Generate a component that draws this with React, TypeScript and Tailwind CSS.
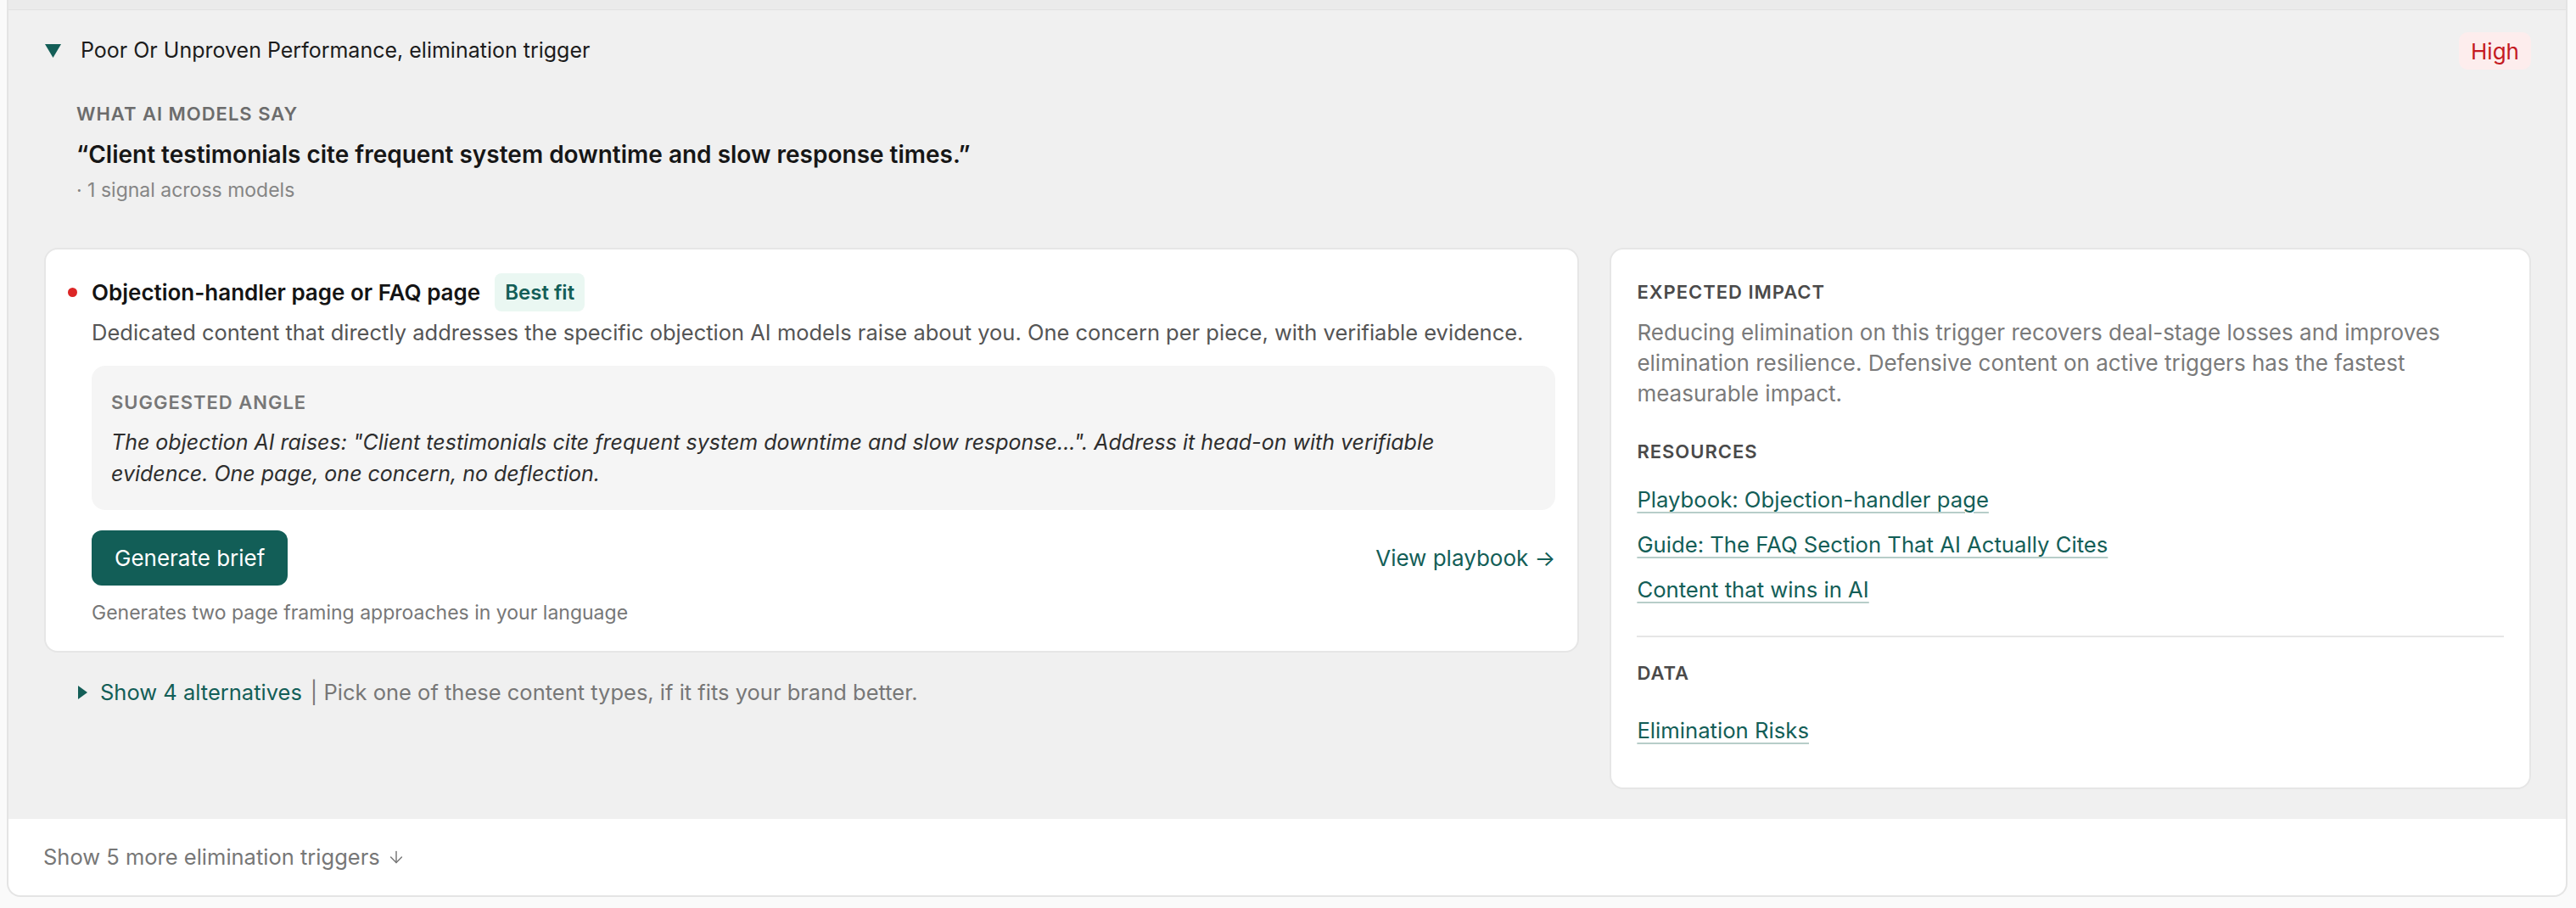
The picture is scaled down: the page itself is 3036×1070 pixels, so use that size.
import { ArrowDown } from 'lucide-react';

const resources = [
  'Playbook: Objection-handler page',
  'Guide: The FAQ Section That AI Actually Cites',
  'Content that wins in AI',
];

function Caret({ dir }: { dir: 'down' | 'right' }) {
  if (dir === 'down') {
    return (
      <svg width="19" height="16" viewBox="0 0 19 16" className="shrink-0">
        <path d="M0 0h19L9.5 16z" fill="#135e57" />
      </svg>
    );
  }
  return (
    <svg width="11" height="16" viewBox="0 0 11 16" className="shrink-0">
      <path d="M0 0l11 8-11 8z" fill="#135e57" />
    </svg>
  );
}

function Label({ children, className = '' }: { children: React.ReactNode; className?: string }) {
  return (
    <div className={`text-[22px] leading-[32px] font-semibold uppercase tracking-[0.045em] ${className}`}>
      {children}
    </div>
  );
}

export default function App() {
  return (
    <div className="min-h-screen bg-[#fafafa] font-['Inter',sans-serif]">
      <div className="ml-[8px] mr-[10px] border-x-2 border-b-2 border-[#e4e4e4] rounded-b-[16px] overflow-hidden bg-white">
        <div className="h-[12px] bg-[#ebebeb] border-b border-[#e2e2e2]"></div>

        {/* Expanded trigger */}
        <div className="bg-[#f0f0f0] pl-[42px] pr-[41px] pt-[26px] pb-[35px]">
          <div className="flex items-center justify-between h-[44px]">
            <div className="flex items-center gap-[23px] pl-[1px]">
              <Caret dir="down" />
              <span className="text-[25px] text-[#1c1c1c]">Poor Or Unproven Performance, elimination trigger</span>
            </div>
            <span className="h-[44px] px-[14px] flex items-center rounded-[10px] bg-[#fdeded] text-[26px] text-[#c41a22]">
              High
            </span>
          </div>

          <div className="pl-[38px]">
            <Label className="mt-[36px] text-[#6c6c6c]">What AI models say</Label>
            <div className="mt-[12px] text-[28px] leading-[40px] font-semibold text-[#161616]">
              “Client testimonials cite frequent system downtime and slow response times.”
            </div>
            <div className="mt-[6px] text-[23px] leading-[32px] text-[#858585]">· 1 signal across models</div>
          </div>

          <div className="mt-[52px] grid grid-cols-[5fr_3fr] gap-[36px] items-start">
            <div>
              <div className="bg-white border-2 border-[#e6e6e6] rounded-[16px] pl-[26px] pr-[26px] pt-[28px] pb-[29px]">
                <div className="flex items-center h-[45px]">
                  <span className="w-[11px] h-[11px] rounded-full bg-[#dc2626]"></span>
                  <span className="ml-[17px] text-[26px] font-semibold text-[#141414]">Objection-handler page or FAQ page</span>
                  <span className="ml-[17px] h-[45px] px-[12px] flex items-center rounded-[8px] bg-[#eaf7f2] text-[24px] font-semibold text-[#135e57]">
                    Best fit
                  </span>
                </div>
                <div className="ml-[28px]">
                  <p className="mt-[7px] text-[25.5px] leading-[36px] text-[#555]">
                    Dedicated content that directly addresses the specific objection AI models raise about you. One concern per piece, with verifiable evidence.
                  </p>
                  <div className="mt-[21px] bg-[#f5f5f5] rounded-[16px] px-[23px] pt-[27px] pb-[24px]">
                    <Label className="text-[#777]">Suggested angle</Label>
                    <p className="mt-[13px] text-[25px] leading-[37px] italic text-[#2e2e2e]">
                      The objection AI raises: "Client testimonials cite frequent system downtime and slow response...". Address it head-on with verifiable evidence. One page, one concern, no deflection.
                    </p>
                  </div>
                  <div className="mt-[24px] flex items-center justify-between">
                    <button className="h-[65px] px-[27px] rounded-[12px] bg-[#125e57] text-white text-[26px]">
                      Generate brief
                    </button>
                    <span className="text-[26px] text-[#135e57]">View playbook →</span>
                  </div>
                  <div className="mt-[16px] text-[23px] leading-[32px] text-[#777]">
                    Generates two page framing approaches in your language
                  </div>
                </div>
              </div>
              <div className="mt-[29px] pl-[40px] flex items-center h-[36px] text-[25.5px]">
                <Caret dir="right" />
                <span className="ml-[15px] text-[#135e57]">Show 4 alternatives</span>
                <span className="ml-[10px] text-[#777]">| Pick one of these content types, if it fits your brand better.</span>
              </div>
            </div>

            <div className="bg-white border-2 border-[#e6e6e6] rounded-[16px] px-[30px] pt-[34px] pb-[49px]">
              <Label className="text-[#4a4a4a]">Expected impact</Label>
              <p className="mt-[14px] text-[26px] leading-[36px] text-[#7a7a7a]">
                Reducing elimination on this trigger recovers deal-stage losses and improves elimination resilience. Defensive content on active triggers has the fastest measurable impact.
              </p>
              <Label className="mt-[34px] text-[#4a4a4a]">Resources</Label>
              <div className="mt-[23px] flex flex-col gap-[17px] items-start">
                {resources.map((r) => (
                  <a
                    key={r}
                    className="text-[25.7px] leading-[36px] text-[#135e57] underline decoration-2 decoration-[#b7cdc9] underline-offset-[5px]"
                  >
                    {r}
                  </a>
                ))}
              </div>
              <div className="mt-[36px] h-[2px] bg-[#e6e6e6]"></div>
              <Label className="mt-[26px] text-[#4a4a4a]">Data</Label>
              <div className="mt-[34px]">
                <a className="text-[25.7px] leading-[36px] text-[#135e57] underline decoration-2 decoration-[#b7cdc9] underline-offset-[5px]">
                  Elimination Risks
                </a>
              </div>
            </div>
          </div>
        </div>

        {/* Footer */}
        <div className="h-[90px] px-[41px] flex items-center gap-[8px] text-[25.5px] text-[#777]">
          <span>Show 5 more elimination triggers</span>
          <ArrowDown size={22} strokeWidth={1.6} />
        </div>
      </div>
    </div>
  );
}
